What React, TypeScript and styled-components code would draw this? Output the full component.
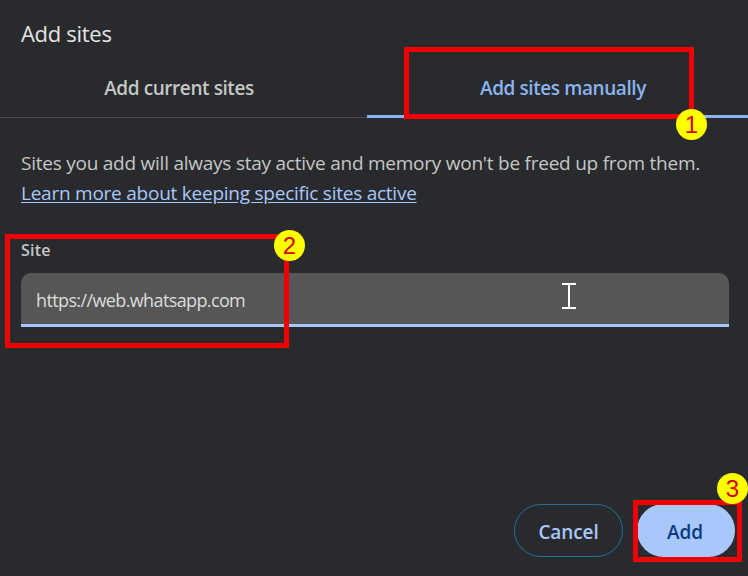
import React from 'react'
import styled, {createGlobalStyle} from 'styled-components'

const GlobalStyle = createGlobalStyle`
  html, body {
    margin: 0;
    padding: 0;
    background: #292a2d;
    overflow: hidden;
  }
`

const Dialog = styled.div`
  position: relative;
  width: 748px;
  height: 576px;
  overflow: hidden;
  display: flex;
  flex-direction: column;
  background: #292a2d;
  font-family: "Open Sans", "Noto Sans", sans-serif;
  color: #c4c7c5;
`

const Title = styled.h1`
  margin: 0;
  padding: 19px 21px 0;
  height: 50px;
  box-sizing: border-box;
  font-size: 22px;
  line-height: 28px;
  font-weight: 400;
  letter-spacing: -0.3px;
  color: #e3e3e3;
`

const Tabs = styled.div`
  display: grid;
  grid-template-columns: 367px 381px;
  height: 68px;
  border-bottom: 1px solid #47484b;
  box-sizing: border-box;
`

const Tab = styled.div<{$active?: boolean; $shift: number}>`
  display: flex;
  align-items: center;
  justify-content: center;
  box-sizing: border-box;
  height: 68px;
  padding: 8px ${p => (p.$shift < 0 ? -p.$shift : 0)}px 0 ${p => (p.$shift > 0 ? p.$shift : 0)}px;
  font-size: 19px;
  font-weight: 600;
  letter-spacing: -0.42px;
  color: ${p => (p.$active ? '#8ab4f0' : '#c4c7c5')};
  box-shadow: ${p => (p.$active ? 'inset 0 -3px 0 #8ab4f0' : 'none')};
`

const Body = styled.div`
  padding: 30px 21px 0;
  font-size: 19px;
  line-height: 30px;
  letter-spacing: -0.24px;
`

const Paragraph = styled.p`
  margin: 0;
  white-space: nowrap;
`

const LearnLink = styled.a`
  color: #a8c7fa;
  text-decoration: underline;
  text-underline-offset: 2px;
`

const Field = styled.div`
  margin-top: 31px;
  display: flex;
  flex-direction: column;
`

const FieldLabel = styled.label`
  font-size: 16px;
  line-height: 22px;
  font-weight: 600;
  letter-spacing: 0.2px;
  color: #c4c7c5;
`

const InputBox = styled.div`
  margin-top: 12px;
  box-sizing: border-box;
  width: 708px;
  height: 54px;
  display: flex;
  align-items: center;
  padding: 2px 15px 0;
  border-radius: 10px 10px 0 0;
  border-bottom: 3px solid #a8c7fa;
  background: #555655;
  font-size: 18px;
  letter-spacing: -0.62px;
  color: #dcdddc;
`

const Footer = styled.div`
  margin-top: auto;
  padding: 0 13px 19px 0;
  display: flex;
  justify-content: flex-end;
  align-items: center;
  gap: 14px;
`

const Button = styled.button<{$primary?: boolean}>`
  box-sizing: border-box;
  height: 53px;
  width: ${p => (p.$primary ? 98 : 109)}px;
  padding: 2px ${p => (p.$primary ? 2 : 0)}px 0 0;
  border-radius: 27px;
  font-family: inherit;
  font-size: 19px;
  font-weight: 600;
  letter-spacing: -0.1px;
  color: ${p => (p.$primary ? '#0a3a80' : '#a8c7fa')};
  background: ${p => (p.$primary ? '#a8c7fa' : 'transparent')};
  border: ${p => (p.$primary ? 'none' : '1px solid #1f7396')};
`

const Highlight = styled.div<{$x: number; $y: number; $w: number; $h: number}>`
  position: absolute;
  left: ${p => p.$x}px;
  top: ${p => p.$y}px;
  width: ${p => p.$w}px;
  height: ${p => p.$h}px;
  box-sizing: border-box;
  border: 5px solid #f00000;
`

const Badge = styled.div<{$x: number; $y: number}>`
  position: absolute;
  left: ${p => p.$x}px;
  top: ${p => p.$y}px;
  width: 31px;
  height: 31px;
  border-radius: 50%;
  background: #ffff00;
  color: #d40000;
  display: flex;
  align-items: center;
  justify-content: center;
  font-family: "Liberation Sans", Arial, sans-serif;
  font-size: 24px;
`

const TextCursor = styled.svg`
  position: absolute;
  left: 561px;
  top: 282px;
`

const App: React.FC = () => {
  return (
    <Dialog>
      <GlobalStyle />
      <Title>Add sites</Title>
      <Tabs>
        <Tab $shift={-9}>Add current sites</Tab>
        <Tab $active $shift={11}>Add sites manually</Tab>
      </Tabs>
      <Body>
        <Paragraph>Sites you add will always stay active and memory won't be freed up from them.</Paragraph>
        <Paragraph><LearnLink>Learn more about keeping specific sites active</LearnLink></Paragraph>
        <Field>
          <FieldLabel>Site</FieldLabel>
          <InputBox>https://web.whatsapp.com</InputBox>
        </Field>
      </Body>
      <Footer>
        <Button>Cancel</Button>
        <Button $primary>Add</Button>
      </Footer>

      <TextCursor width="16" height="28" viewBox="0 0 16 28">
        <path d="M1 2h14M8 2v24M1 26h14" stroke="#fff" strokeWidth="2" fill="none" />
      </TextCursor>

      <Highlight $x={404} $y={47} $w={290} $h={72} />
      <Highlight $x={5} $y={234} $w={284} $h={114} />
      <Highlight $x={633} $y={500} $w={109} $h={62} />
      <Badge $x={676} $y={109}>1</Badge>
      <Badge $x={274} $y={230}>2</Badge>
      <Badge $x={717} $y={473}>3</Badge>
    </Dialog>
  )
}

export default App
